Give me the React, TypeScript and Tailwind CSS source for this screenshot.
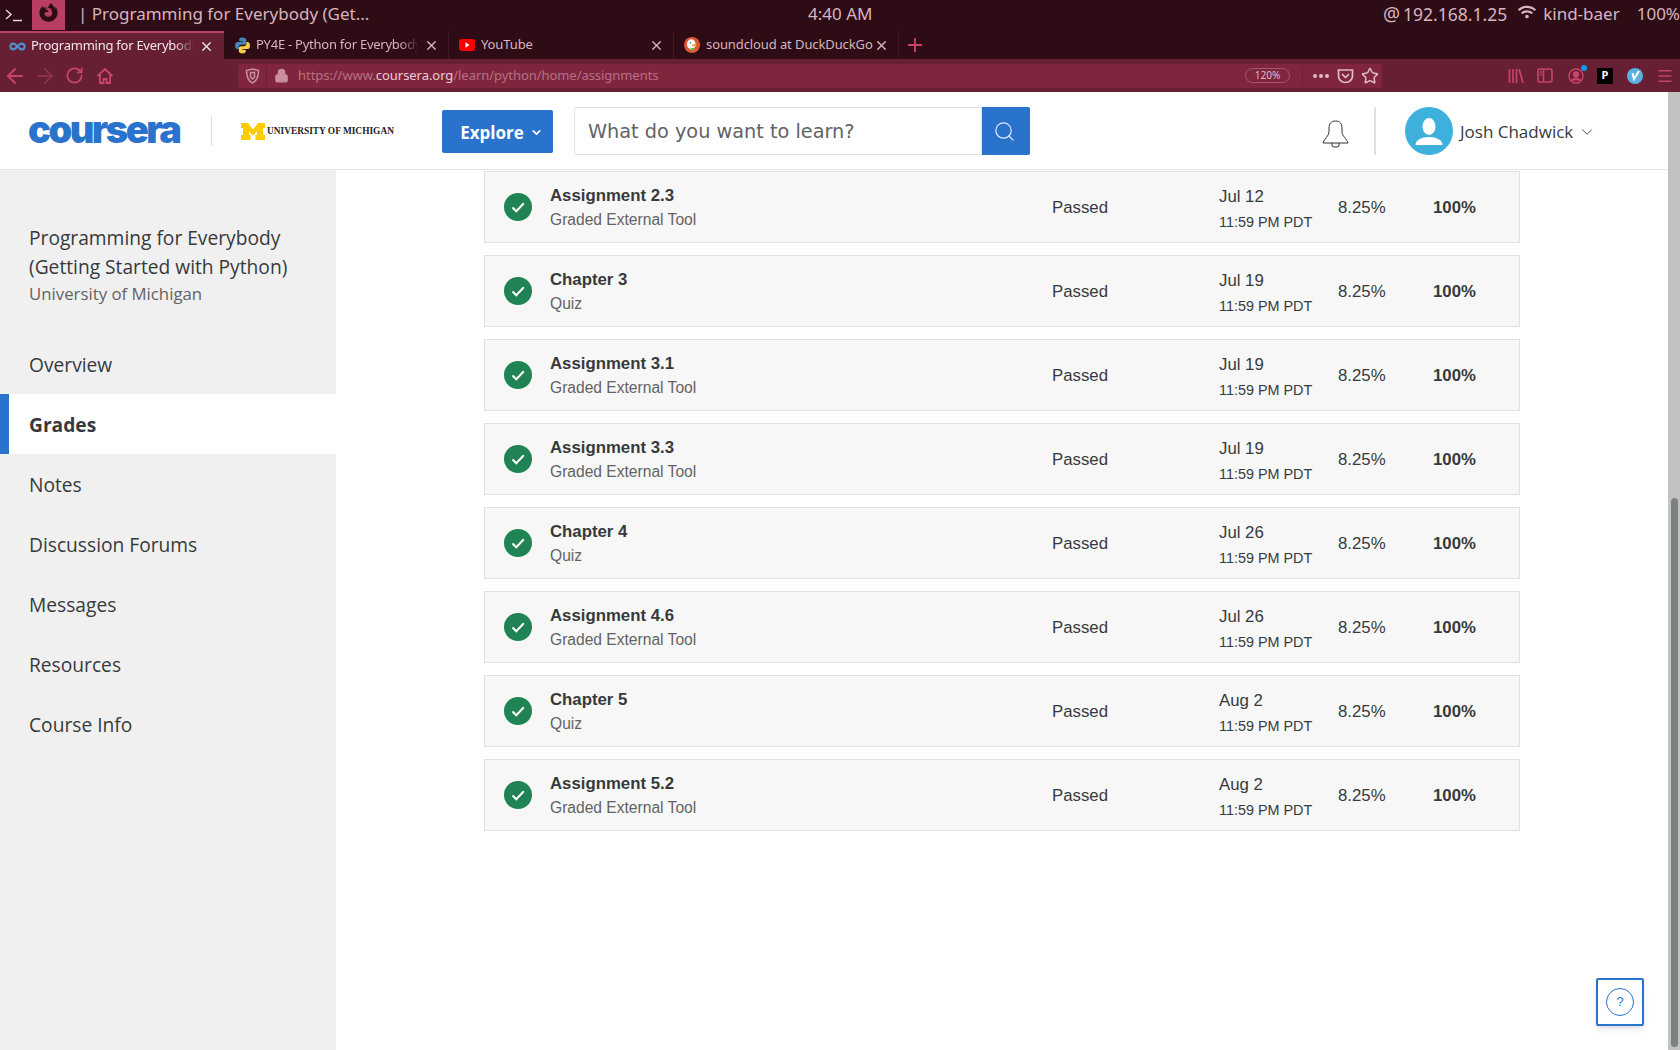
import { ArrowLeft, ArrowRight, RotateCw, Lock, ChevronDown, Search, X, Plus, Menu, Star, Infinity as InfinityIcon } from 'lucide-react';
import { FaFirefoxBrowser, FaWifi } from 'react-icons/fa';

const ROWS = [
  { title: 'Assignment 2.3', kind: 'Graded External Tool', date: 'Jul 12' },
  { title: 'Chapter 3', kind: 'Quiz', date: 'Jul 19' },
  { title: 'Assignment 3.1', kind: 'Graded External Tool', date: 'Jul 19' },
  { title: 'Assignment 3.3', kind: 'Graded External Tool', date: 'Jul 19' },
  { title: 'Chapter 4', kind: 'Quiz', date: 'Jul 26' },
  { title: 'Assignment 4.6', kind: 'Graded External Tool', date: 'Jul 26' },
  { title: 'Chapter 5', kind: 'Quiz', date: 'Aug 2' },
  { title: 'Assignment 5.2', kind: 'Graded External Tool', date: 'Aug 2' },
];

const NAV = ['Overview', 'Grades', 'Notes', 'Discussion Forums', 'Messages', 'Resources', 'Course Info'];

function TopBar() {
  return (
    <div className="flex h-[31px] items-start bg-[#2d0c16] font-['Noto_Sans',sans-serif] text-[17px] leading-[28px] text-[#d8b4bf]">
      <div className="flex h-[30px] w-[32px] items-center pl-[5px]">
        <svg width="18" height="14" viewBox="0 0 18 14" fill="none" stroke="#e6d3d9" strokeWidth="1.5">
          <path d="M1 2l5 4.500L1 11" />
          <path d="M8 12.500h9" />
        </svg>
      </div>
      <div className="flex h-[30px] w-[33px] items-start justify-center bg-[#b83e63] pt-[3px]">
        <FaFirefoxBrowser className="text-[19px] text-[#2d0c16]" />
      </div>
      <div className="ml-[13px] w-[300px] whitespace-nowrap">| Programming for Everybody (Get...</div>
      <div className="ml-[430px] w-[100px] whitespace-nowrap">4:40 AM</div>
      <div className="ml-auto flex items-center whitespace-nowrap">
        <span className="mr-[3px] text-[19px]">@</span>
        <span className="text-[17.500px]">192.168.1.25</span>
        <FaWifi className="ml-[11px] mr-[7px] mb-[5px] text-[18px]" />
        <span>kind-baer</span>
        <span className="ml-[17px]">100%</span>
      </div>
    </div>
  );
}

function Tab({ icon, label, active, fade }: { icon: React.ReactNode; label: string; active?: boolean; fade?: boolean }) {
  return (
    <div
      className={
        active
          ? 'flex h-[28px] w-[224px] items-center border-t-2 border-[#b83e63] bg-[#671f33] pl-[9px] pr-[10px] text-[#f0e6ea]'
          : 'flex h-[28px] w-[225px] items-center border-r border-[#3f1823] pl-[10px] pr-[9px] text-[#d8b4bf]'
      }
    >
      <span className="flex w-[22px] shrink-0 items-center">{icon}</span>
      <span
        className={
          fade
            ? 'mr-[5px] flex-1 overflow-hidden whitespace-nowrap tracking-[-0.25px] [mask-image:linear-gradient(to_right,black_88%,transparent)]'
            : 'flex-1 overflow-hidden whitespace-nowrap tracking-[-0.1px]'
        }
      >
        {label}
      </span>
      <X size={15} strokeWidth={2.2} className="shrink-0" />
    </div>
  );
}

function TabBar() {
  return (
    <div className="flex h-[28px] items-start bg-[#2d0c16] font-['Noto_Sans',sans-serif] text-[13px]">
      <Tab active fade label="Programming for Everybody" icon={<InfinityIcon size={17} strokeWidth={3} className="text-[#4f8fd0]" />} />
      <Tab
        fade
        label="PY4E - Python for Everybody"
        icon={
          <svg width="17" height="17" viewBox="0 0 16 16">
            <path d="M8 .5C5.200.5 5 1.700 5 2.500V4h3.200v.6H3.300C2 4.600 1 5.600 1 8s1 3.400 2.200 3.400h1.200V9.600c0-1.200 1-2.200 2.200-2.200h3c1 0 1.900-.9 1.900-1.900V2.500C11.300 1.300 10 .5 8 .5z" fill="#4a83b8" />
            <path d="M8 15.500c2.800 0 3-1.200 3-2V12H7.800v-.6h4.900C14 11.400 15 10.400 15 8s-1-3.400-2.200-3.400h-1.200v1.800c0 1.200-1 2.200-2.200 2.200h-3c-1 0-1.900.9-1.900 1.900v3c0 1.200 1.300 2 3.300 2z" fill="#f5cf47" />
          </svg>
        }
      />
      <Tab
        label="YouTube"
        icon={
          <svg width="16" height="12" viewBox="0 0 16 12">
            <rect width="16" height="12" rx="3" fill="#f00" />
            <path d="M6.500 3.200l4 2.800-4 2.800z" fill="#fff" />
          </svg>
        }
      />
      <Tab
        label="soundcloud at DuckDuckGo"
        icon={
          <svg width="16" height="16" viewBox="0 0 16 16">
            <circle cx="8" cy="8" r="8" fill="#de5833" />
            <ellipse cx="7.300" cy="7.200" rx="4.300" ry="5" fill="#fff" />
            <circle cx="6.300" cy="5.800" r=".8" fill="#2d4f8e" />
            <path d="M8 7.500l4.500-.8-.6 2.400-3.900.4z" fill="#f5a623" />
            <ellipse cx="8.300" cy="12.300" rx="2.300" ry="1.200" fill="#65bc46" />
          </svg>
        }
      />
      <Plus size={22} strokeWidth={2} className="ml-[5px] mt-[3px] text-[#c8446c]" />
    </div>
  );
}

function ToolBar() {
  return (
    <div className="flex h-[33px] items-center bg-[#671f33] font-['Noto_Sans',sans-serif]">
      <ArrowLeft size={24} strokeWidth={1.800} className="ml-[3px] text-[#c8446c]" />
      <ArrowRight size={24} strokeWidth={1.800} className="ml-[6px] text-[#8a3149]" />
      <RotateCw size={19} strokeWidth={2.200} className="ml-[8px] text-[#c8446c]" />
      <svg width="18" height="18" viewBox="0 0 18 18" fill="none" stroke="#c8446c" strokeWidth="1.800" className="ml-[12px]">
        <path d="M1.500 9L9 2l7.500 7M4 7.500V16h3.500v-4h3v4H14V7.500" />
      </svg>
      <div className="ml-[124px] flex h-[24px] w-[1144px] items-center rounded-[3px] bg-[#7f263e] text-[13px]">
        <svg width="15" height="16" viewBox="0 0 15 16" fill="none" stroke="#c98ea0" strokeWidth="1.600" className="ml-[7px]">
          <path d="M1.500 2.500C4 2 5.500 1.500 7.500 1c2 .5 3.500 1 6 1.500 0 6-1 10-6 12.500-5-2.500-6-6.500-6-12.500z" />
          <path d="M5.500 4.500h4v4.500l-2 2-2-2z" />
        </svg>
        <div className="ml-[6px] mr-[7px] h-[18px] w-px bg-[#6b1f33]" />
        <Lock size={15} fill="#c98ea0" className="text-[#c98ea0]" />
        <span className="ml-[9px] whitespace-nowrap tracking-[-0.05px] text-[#b76f85]">
          https://www.<span className="text-[#e8ccd4]">coursera.org</span>/learn/python/home/assignments
        </span>
        <div className="ml-auto flex h-[15px] w-[45px] items-center justify-center rounded-full border border-[#a35a70] text-[10px] text-[#e0bcc7]">120%</div>
        <div className="ml-[12px] h-[18px] w-px bg-[#6b1f33]" />
        <div className="ml-[10px] flex gap-[2px]">
          <span className="h-[4px] w-[4px] rounded-full bg-[#e0bcc7]" />
          <span className="h-[4px] w-[4px] rounded-full bg-[#e0bcc7]" />
          <span className="h-[4px] w-[4px] rounded-full bg-[#e0bcc7]" />
        </div>
        <svg width="17" height="16" viewBox="0 0 17 16" fill="none" stroke="#e0bcc7" strokeWidth="1.700" className="ml-[8px]">
          <path d="M1.500 2h14v6a7 6.500 0 0 1-14 0z" />
          <path d="M5 6l3.500 3.500L12 6" />
        </svg>
        <Star size={18} strokeWidth={2} className="ml-[7px] mr-[3px] text-[#e0bcc7]" />
      </div>
      <div className="ml-auto flex items-center pr-[6px]">
        <svg width="16" height="16" viewBox="0 0 16 16" fill="none" stroke="#c8446c" strokeWidth="1.700">
          <path d="M1.500 1v14M5 1v14M8.500 1v14M11 1l4 14" />
        </svg>
        <svg width="16" height="15" viewBox="0 0 16 15" fill="none" stroke="#c8446c" strokeWidth="1.600" className="ml-[13px]">
          <rect x="1" y="1" width="14" height="13" rx="2" />
          <path d="M6.500 1v13M3 4h2M3 6.500h2" />
        </svg>
        <div className="relative ml-[15px] h-[16px] w-[16px]">
          <svg width="16" height="16" viewBox="0 0 16 16" fill="none" stroke="#c8446c" strokeWidth="1.500">
            <circle cx="8" cy="8" r="7" />
            <circle cx="8" cy="6.500" r="2.500" fill="#c8446c" />
            <path d="M3.500 12.500c1.500-2.500 7.500-2.500 9 0" fill="#c8446c" />
          </svg>
          <span className="absolute right-[-3px] top-[-3px] h-[6px] w-[6px] rounded-full bg-[#0a9bf5]" />
        </div>
        <div className="ml-[13px] flex h-[16px] w-[16px] items-center justify-center rounded-[1px] bg-black text-[11px] font-bold text-white">P</div>
        <div className="ml-[14px] flex h-[16px] w-[16px] items-center justify-center rounded-full bg-[#5ab0e2]">
          <svg width="12" height="12" viewBox="0 0 12 12" fill="none" stroke="#fff" strokeWidth="2">
            <path d="M3.500 3l1.500 6 5-8" />
          </svg>
        </div>
        <Menu size={18} strokeWidth={2} className="ml-[13px] text-[#c8446c]" />
      </div>
    </div>
  );
}

function Header() {
  return (
    <div className="flex h-[78px] shrink-0 items-start border-b border-[#e5e5e5] bg-white font-['Open_Sans',sans-serif]">
      <div className="ml-[28px] mt-[15px] w-[156px] whitespace-nowrap font-['Inter',sans-serif] text-[38px] font-black leading-[44px] tracking-[-2.500px] text-[#2a73cc]">coursera</div>
      <div className="ml-[27px] mt-[24px] h-[30px] w-px bg-[#dcdcdc]" />
      <div className="ml-[29px] mt-[30px] flex h-[18px] w-[153px] items-center">
        <svg width="24" height="17" viewBox="0 0 24 17" className="shrink-0">
          <path d="M0 0h7l5 6.500L17 0h7v5h-2v7h2v5h-9.500v-5h1.500V8l-4 5-4-5v4h1.500v5H0v-5h2V5H0z" fill="#ffcb05" />
        </svg>
        <span className="ml-[2px] whitespace-nowrap font-['Liberation_Serif',serif] text-[9.400px] font-bold text-[#222]">UNIVERSITY OF MICHIGAN</span>
      </div>
      <button className="ml-[48px] mt-[18px] flex h-[43px] w-[111px] items-center justify-center rounded-[2px] bg-[#2a73cc] pl-[8px] pt-[2px] text-[17px] font-bold text-white">
        Explore
        <ChevronDown size={13} strokeWidth={3} className="ml-[6px]" />
      </button>
      <div className="ml-[21px] mt-[15px] flex h-[48px] w-[456px]">
        <div className="flex flex-1 items-center rounded-l-[2px] border border-[#e1e1e1] pl-[13px] pt-[2px] font-['DejaVu_Sans',sans-serif] text-[19.300px] text-[#636363]">What do you want to learn?</div>
        <div className="flex w-[48px] items-center justify-center rounded-r-[2px] bg-[#2a73cc] pr-[3px]">
          <Search size={23} strokeWidth={1.300} className="text-[#dfe9f6]" />
        </div>
      </div>
      <svg width="27" height="28" viewBox="0 0 27 28" fill="none" stroke="#333" strokeWidth="1" className="ml-[292px] mt-[28px]">
        <path d="M13.500 1C9 1 7 4 7 8v4c0 4-5 7-6 11h25c-1-4-6-7-6-11V8c0-4-2-7-6.500-7z" />
        <path d="M10 23v2a2 2 0 0 0 2 2h3a2 2 0 0 0 2-2v-2" />
      </svg>
      <div className="ml-[25px] mt-[15px] h-[48px] w-[2px] bg-[#e1e1e1]" />
      <svg width="48" height="48" viewBox="0 0 48 48" className="ml-[29px] mt-[15px]">
        <circle cx="24" cy="24" r="24" fill="#3eb0dc" />
        <ellipse cx="24" cy="19.500" rx="6.500" ry="8.500" fill="#fff" />
        <path d="M10.500 38c0-5 6-8 13.500-8s13.500 3 13.500 8z" fill="#fff" />
      </svg>
      <div className="ml-[7px] mt-[15px] flex h-[48px] items-center whitespace-nowrap pt-[2px] text-[17px] text-[#373a3c]">
        Josh Chadwick
        <ChevronDown size={18} strokeWidth={1.200} className="ml-[5px]" />
      </div>
    </div>
  );
}

function Sidebar() {
  return (
    <div className="flex h-full w-[336px] shrink-0 flex-col bg-[#f0f0f0] font-['Open_Sans',sans-serif] text-[#373a3c]">
      <div className="pl-[29px] pr-[20px] pt-[53px]">
        <div className="text-[19.200px] leading-[29px]">Programming for Everybody (Getting Started with Python)</div>
        <div className="pt-[1px] text-[16.800px] leading-[24px] text-[#636363]">University of Michigan</div>
      </div>
      <div className="mt-[28px]">
        {NAV.map((item) =>
          item === 'Grades' ? (
            <div key={item} className="flex h-[60px] items-center border-l-[9px] border-[#2a73cc] bg-white pl-[20px] pt-[2px] text-[19.200px] font-bold">
              {item}
            </div>
          ) : (
            <div key={item} className="flex h-[60px] items-center pl-[29px] pt-[2px] text-[19.200px]">
              {item}
            </div>
          ),
        )}
      </div>
    </div>
  );
}

function GradeRow({ title, kind, date }: { title: string; kind: string; date: string }) {
  return (
    <div className="grid h-[72px] grid-cols-[65px_502px_167px_119px_95px_1fr] items-center border border-[#e1e1e1] bg-[#f7f7f7] pt-[2px] font-['Liberation_Sans',sans-serif] text-[16.800px] text-[#373a3c]">
      <div className="-mt-[2px] flex justify-center">
        <svg width="28" height="28" viewBox="0 0 28 28">
          <circle cx="14" cy="14" r="14" fill="#1f8354" />
          <path d="M8.500 14.500l3.800 3.800 7.500-8" fill="none" stroke="#fff" strokeWidth="2" />
        </svg>
      </div>
      <div>
        <div className="font-bold leading-[24px]">{title}</div>
        <div className="text-[15.600px] leading-[24px] text-[#636363]">{kind}</div>
      </div>
      <div>Passed</div>
      <div className="pt-[2px]">
        <div className="leading-[27px]">{date}</div>
        <div className="text-[14.400px] leading-[25px]">11:59 PM PDT</div>
      </div>
      <div>8.25%</div>
      <div className="font-bold">100%</div>
    </div>
  );
}

export default function App() {
  return (
    <div className="relative flex h-[1050px] w-[1680px] flex-col overflow-hidden bg-white">
      <TopBar />
      <TabBar />
      <ToolBar />
      <div className="flex flex-1 overflow-hidden">
        <div className="flex w-[1668px] flex-col">
          <Header />
          <div className="flex flex-1 overflow-hidden">
            <Sidebar />
            <div className="ml-[148px] flex w-[1036px] flex-col gap-[12px] pt-[1px]">
              {ROWS.map((row) => (
                <GradeRow key={row.title} {...row} />
              ))}
            </div>
          </div>
        </div>
        <div className="w-[12px] bg-[#c1c3c3] pl-[3px] pt-[406px]">
          <div className="h-[549px] w-[7px] rounded-full bg-[#7d8082]" />
        </div>
      </div>
      <div className="absolute left-[1596px] top-[978px] flex h-[48px] w-[48px] items-center justify-center rounded-[2px] border-2 border-[#2a73cc] bg-white shadow-md">
        <div className="flex h-[28px] w-[28px] items-center justify-center rounded-full border border-[#2a73cc] font-['Liberation_Sans',sans-serif] text-[13px] text-[#2a73cc]">?</div>
      </div>
    </div>
  );
}
